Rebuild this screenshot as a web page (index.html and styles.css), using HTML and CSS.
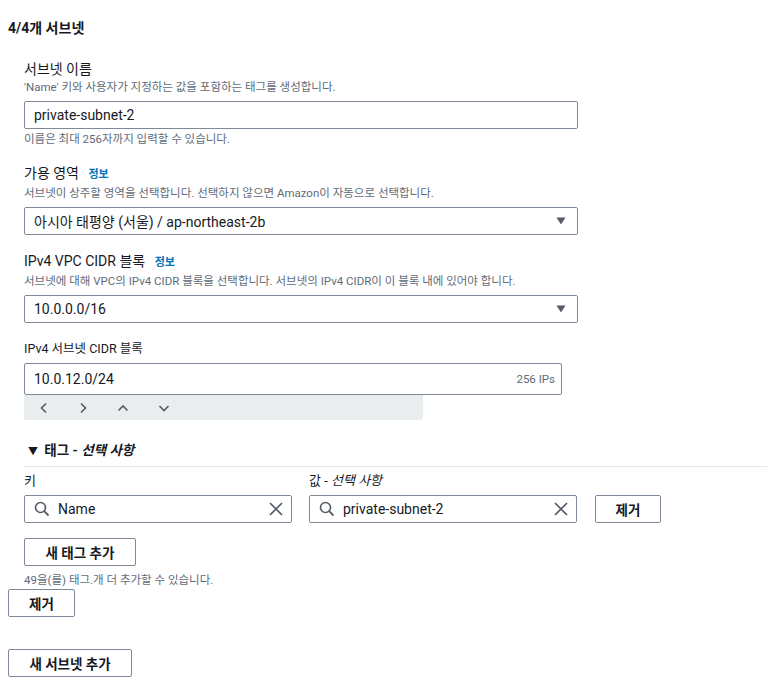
FILE: index.html
```html
<!DOCTYPE html>
<html lang="ko">
<head>
<meta charset="utf-8">
<link rel="stylesheet" href="styles.css">
</head>
<body>
<div class="page">
  <h2 class="title">4/4개 서브넷</h2>
  <div class="subnet">
    <div class="field">
      <div class="label">서브넷 이름</div>
      <div class="desc">'Name' 키와 사용자가 지정하는 값을 포함하는 태그를 생성합니다.</div>
      <div class="box wide">private-subnet-2</div>
      <div class="hint">이름은 최대 256자까지 입력할 수 있습니다.</div>
    </div>
    <div class="field">
      <div class="label">가용 영역 <a class="info">정보</a></div>
      <div class="desc">서브넷이 상주할 영역을 선택합니다. 선택하지 않으면 Amazon이 자동으로 선택합니다.</div>
      <div class="box wide select"><span>아시아 태평양 (서울) / ap-northeast-2b</span><svg class="caret" width="10" height="8" viewBox="0 0 10 8"><path d="M0.5 0.5h9L5 7.5z" fill="#545b64"/></svg></div>
    </div>
    <div class="field">
      <div class="label">IPv4 VPC CIDR 블록 <a class="info">정보</a></div>
      <div class="desc">서브넷에 대해 VPC의 IPv4 CIDR 블록을 선택합니다. 서브넷의 IPv4 CIDR이 이 블록 내에 있어야 합니다.</div>
      <div class="box wide select"><span>10.0.0.0/16</span><svg class="caret" width="10" height="8" viewBox="0 0 10 8"><path d="M0.5 0.5h9L5 7.5z" fill="#545b64"/></svg></div>
    </div>
    <div class="field">
      <div class="label small">IPv4 서브넷 CIDR 블록</div>
      <div class="box cidr"><span>10.0.12.0/24</span><span class="ips">256 IPs</span></div>
      <div class="stepper">
        <svg width="10" height="12" viewBox="0 0 10 12"><path d="M7 1.5L2.5 6 7 10.5" fill="none" stroke="#545b64" stroke-width="1.6"/></svg>
        <svg width="10" height="12" viewBox="0 0 10 12"><path d="M3 1.5L7.5 6 3 10.5" fill="none" stroke="#545b64" stroke-width="1.6"/></svg>
        <svg width="12" height="10" viewBox="0 0 12 10"><path d="M1.5 7.5L6 3l4.5 4.5" fill="none" stroke="#545b64" stroke-width="1.6"/></svg>
        <svg width="12" height="10" viewBox="0 0 12 10"><path d="M1.5 3L6 7.5 10.5 3" fill="none" stroke="#545b64" stroke-width="1.6"/></svg>
      </div>
    </div>

    <div class="tags-head"><span class="tri">▼</span> 태그 - <i>선택 사항</i></div>
    <div class="divider"></div>
    <div class="tag-row">
      <div class="tag-col">
        <div class="label">키</div>
        <div class="box tag">
          <svg class="search" width="16" height="16" viewBox="0 0 16 16"><circle cx="6.5" cy="6.5" r="5" fill="none" stroke="#545b64" stroke-width="1.6"/><path d="M10.2 10.2L14.5 14.5" stroke="#545b64" stroke-width="1.8"/></svg>
          <span class="tagtext">Name</span>
          <svg class="clear" width="14" height="14" viewBox="0 0 14 14"><path d="M1 1L13 13M13 1L1 13" stroke="#545b64" stroke-width="1.7"/></svg>
        </div>
      </div>
      <div class="tag-col">
        <div class="label">값 - <i>선택 사항</i></div>
        <div class="box tag">
          <svg class="search" width="16" height="16" viewBox="0 0 16 16"><circle cx="6.5" cy="6.5" r="5" fill="none" stroke="#545b64" stroke-width="1.6"/><path d="M10.2 10.2L14.5 14.5" stroke="#545b64" stroke-width="1.8"/></svg>
          <span class="tagtext">private-subnet-2</span>
          <svg class="clear" width="14" height="14" viewBox="0 0 14 14"><path d="M1 1L13 13M13 1L1 13" stroke="#545b64" stroke-width="1.7"/></svg>
        </div>
      </div>
      <button class="btn remove-tag">제거</button>
    </div>
    <button class="btn add-tag">새 태그 추가</button>
    <div class="hint tight">49을(를) 태그.개 더 추가할 수 있습니다.</div>
  </div>
  <button class="btn remove-subnet">제거</button>
  <button class="btn add-subnet">새 서브넷 추가</button>
</div>
</body>
</html>
```
FILE: styles.css
```css
* { box-sizing: border-box; }
body {
  margin: 0;
  background: #ffffff;
  color: #16191f;
  font-family: Roboto, "Noto Sans CJK KR", sans-serif;
  font-size: 14px;
}
.page {
  padding: 18px 0 0 8px;
  display: flex;
  flex-direction: column;
  align-items: flex-start;
}
.title {
  margin: 0;
  font-size: 14px;
  line-height: 20px;
  font-weight: 700;
}
.subnet {
  padding-left: 16px;
  width: 759px;
  display: flex;
  flex-direction: column;
  align-items: flex-start;
}
.field {
  display: flex;
  flex-direction: column;
  align-items: flex-start;
}
.field:first-child { margin-top: 21px; }
.field + .field { margin-top: 16px; }
.label {
  font-size: 14px;
  line-height: 20px;
  color: #16191f;
}
.label.small { font-size: 12.5px; }
.info {
  color: #0073bb;
  font-weight: 700;
  font-size: 11px;
  margin-left: 6px;
}
.desc {
  font-size: 11.5px;
  line-height: 16px;
  color: #5f6b7a;
  margin-top: 0;
}
.hint {
  font-size: 11.5px;
  line-height: 16px;
  color: #5f6b7a;
  margin-top: 2px;
}
.hint.tight { margin-top: 6px; }
.box {
  border: 1px solid #7d8998;
  border-radius: 2px;
  height: 28px;
  display: flex;
  align-items: center;
  padding: 0 9px;
  font-size: 14px;
  margin-top: 6px;
  background: #fff;
}
.wide { width: 554px; }
.select { justify-content: space-between; margin-top: 6px; padding-right: 11px; }
.cidr {
  width: 538px;
  height: 32px;
  justify-content: space-between;
  padding-right: 6px;
  margin-top: 4px;
}
.ips { font-size: 11.5px; color: #5f6b7a; }
.stepper {
  width: 399px;
  height: 25px;
  background: #eaeded;
  border-radius: 0 0 3px 3px;
  display: flex;
  align-items: center;
  padding-left: 15px;
  gap: 29px;
}
.tags-head {
  margin-top: 20px;
  margin-left: 4px;
  font-weight: 700;
  font-size: 13.5px;
  line-height: 20px;
}
.tags-head i { font-weight: 700; }
.tri { font-size: 10px; margin-right: 3px; }
.divider {
  width: 743px;
  height: 1px;
  background: #e5e7e9;
  margin-top: 4px;
}
.tag-row {
  display: flex;
  align-items: flex-end;
  gap: 17px;
  margin-top: 5px;
}
.tag-col {
  display: flex;
  flex-direction: column;
}
.tag-col .label { font-size: 13px; line-height: 18px; }
.tag {
  width: 268px;
  margin-top: 5px;
  padding: 0 8px 0 9px;
  gap: 8px;
}
.tagtext { flex: 1; }
.btn {
  font-family: inherit;
  font-size: 13.5px;
  font-weight: 700;
  color: #16191f;
  background: #fff;
  border: 1px solid #7d8998;
  border-radius: 2px;
  height: 28px;
  padding: 0;
  cursor: pointer;
}
.remove-tag { width: 66px; margin-left: 1px; }
.add-tag { width: 112px; margin-top: 15px; }
.remove-subnet { width: 67px; margin-top: 1px; }
.add-subnet { width: 124px; margin-top: 32px; }
```
